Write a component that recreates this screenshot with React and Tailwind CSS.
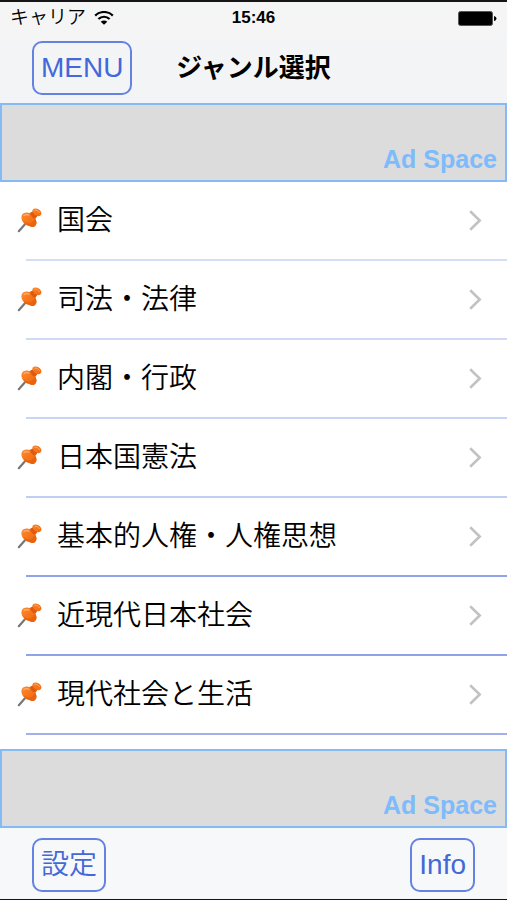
import React from 'react';

const genres = [
  { title: '国会', line: 'border-[#d3def5]' },
  { title: '司法・法律', line: 'border-[#d0daf5]' },
  { title: '内閣・行政', line: 'border-[#c8d5f4]' },
  { title: '日本国憲法', line: 'border-[#c0cef2]' },
  { title: '基本的人権・人権思想', line: 'border-[#8ea3e8]' },
  { title: '近現代日本社会', line: 'border-[#8ea3e8]' },
  { title: '現代社会と生活', line: 'border-[#a3aeea]' },
];

const WifiIcon = () => (
  <svg viewBox="0 0 20 15" className="w-5 h-[15px]" fill="none" stroke="#000" aria-hidden="true">
    <path d="M1.2 4.6 C6 -0.2 14 -0.2 18.8 4.6" strokeWidth="2.2" />
    <path d="M4.4 8 C7.5 5 12.5 5 15.6 8" strokeWidth="2.2" />
    <path d="M10 13.8 L6.7 10.8 C8.6 9 11.4 9 13.3 10.8 Z" fill="#000" stroke="none" />
  </svg>
);

const BatteryIcon = () => (
  <svg viewBox="0 0 39 15" className="w-[39px] h-[15px]" aria-hidden="true">
    <rect x="0.5" y="0.5" width="34" height="14" rx="2" fill="#000" stroke="#555" />
    <path d="M36 5 Q38.5 5.5 38.5 7.5 Q38.5 9.5 36 10 Z" fill="#000" />
  </svg>
);

const PinIcon = () => (
  <svg viewBox="0 1 26 26" className="w-[26px] h-[26px] shrink-0 overflow-visible" aria-hidden="true">
    <defs>
      <linearGradient id="pinBody" x1="0" y1="0" x2="1" y2="1">
        <stop offset="0" stopColor="#fb9442" />
        <stop offset="0.5" stopColor="#f87519" />
        <stop offset="1" stopColor="#e8600f" />
      </linearGradient>
    </defs>
    <path d="M1.8 24.2 L9.5 15.5" stroke="#777" strokeWidth="2.2" strokeLinecap="round" />
    <path
      d="M4.7 8.4 C5.6 5.4 9.6 4.8 13 6 L15.6 4.6 C14.8 2.6 16.2 1.2 18.8 1.4 C22 1.6 24.7 4.4 24.4 6.8 C24.1 8.8 22.2 9.6 20.2 9 L18.2 11.8 C20 14.6 20 18 17.4 19.4 C15.6 20.4 13.4 20 12 18.8 C7.6 18.6 3.2 13 4.7 8.4 Z"
      fill="url(#pinBody)"
    />
    <path d="M15.6 4.6 C16.2 6.8 18 8.5 20.2 9 L18.2 11.8 C15.6 11 13.4 9 13 6 Z" fill="#dd5a10" />
    <path d="M6.6 14 C9 16.8 13 17.2 15.2 15.2 C17 13.8 17.8 12.9 18.2 11.8 C20 14.6 20 18 17.4 19.4 C15.6 20.4 13.4 20 12 18.8 C9.8 18.6 7.8 16.6 6.6 14 Z" fill="#e8630f" />
    <path d="M7 8.4 C8.4 7.4 10.4 7.4 11.8 8.1" stroke="#ffb06c" strokeWidth="1.2" strokeLinecap="round" fill="none" />
    <path d="M17.8 3.1 C19.4 2.8 21.6 4 22.5 5.6" stroke="#ffa868" strokeWidth="1" strokeLinecap="round" fill="none" />
  </svg>
);

const ChevronIcon = () => (
  <svg viewBox="0 0 13 22" className="w-[13px] h-[22px] shrink-0" fill="none" aria-hidden="true">
    <path d="M1.2 1.3 L10.7 10.5 L1.2 19.7" stroke="#c2c2c5" strokeWidth="2.6" />
  </svg>
);

const AdSpace = () => (
  <div className="flex h-[79px] items-end justify-end border-2 border-[#84bbf5] bg-[#dcdcdc] px-2 pb-[7px]">
    <span className="text-[25px] leading-7 font-bold text-[#7dbbfb]">Ad Space</span>
  </div>
);

const BarButton = ({ children }) => (
  <button
    type="button"
    className="h-[54px] cursor-pointer rounded-[10px] border-2 border-[#6482e2] px-[7px] text-[28px] leading-8 font-[350] text-[#4368d9]"
  >
    {children}
  </button>
);

const App = () => {
  return (
    <div className="flex min-h-screen flex-col border-t-2 border-b border-[#161616] bg-white font-['Liberation_Sans','Noto_Sans_CJK_JP',sans-serif] text-black">
      {/* Status bar + navigation */}
      <header className="bg-linear-to-b from-[#f5f5f5] to-[#f2f4f7]">
        <div className="grid h-8 grid-cols-3 items-center px-[10px]">
          <div className="flex items-center gap-2 text-[19px] leading-6 font-[350]">
            <span>キャリア</span>
            <WifiIcon />
          </div>
          <span className="text-center text-[17px] leading-6 font-bold">15:46</span>
          <div className="flex justify-end">
            <BatteryIcon />
          </div>
        </div>
        <nav className="grid h-[69px] grid-cols-[1fr_auto_1fr] items-center px-8 pb-[2px]">
          <div className="flex">
            <BarButton>MENU</BarButton>
          </div>
          <h1 className="text-[26px] leading-8 font-bold">ジャンル選択</h1>
        </nav>
      </header>

      <AdSpace />

      {/* Genre list */}
      <main className="flex-1">
        <ul>
          {genres.map((genre) => (
            <li key={genre.title} className="relative">
              <a href="#" className="flex h-[79px] items-center pr-[25px] pb-[2px] pl-[17px]">
                <PinIcon />
                <span className="ml-[14px] flex-1 text-[28px] leading-9 font-[350]">{genre.title}</span>
                <ChevronIcon />
              </a>
              <div className={`absolute right-0 bottom-0 left-[26px] border-b-2 ${genre.line}`} />
            </li>
          ))}
        </ul>
      </main>

      <AdSpace />

      {/* Toolbar */}
      <footer className="flex h-[71px] items-center justify-between bg-[#f7f8f9] px-8 pt-[2px]">
        <BarButton>設定</BarButton>
        <BarButton>Info</BarButton>
      </footer>
    </div>
  );
};

export default App;
